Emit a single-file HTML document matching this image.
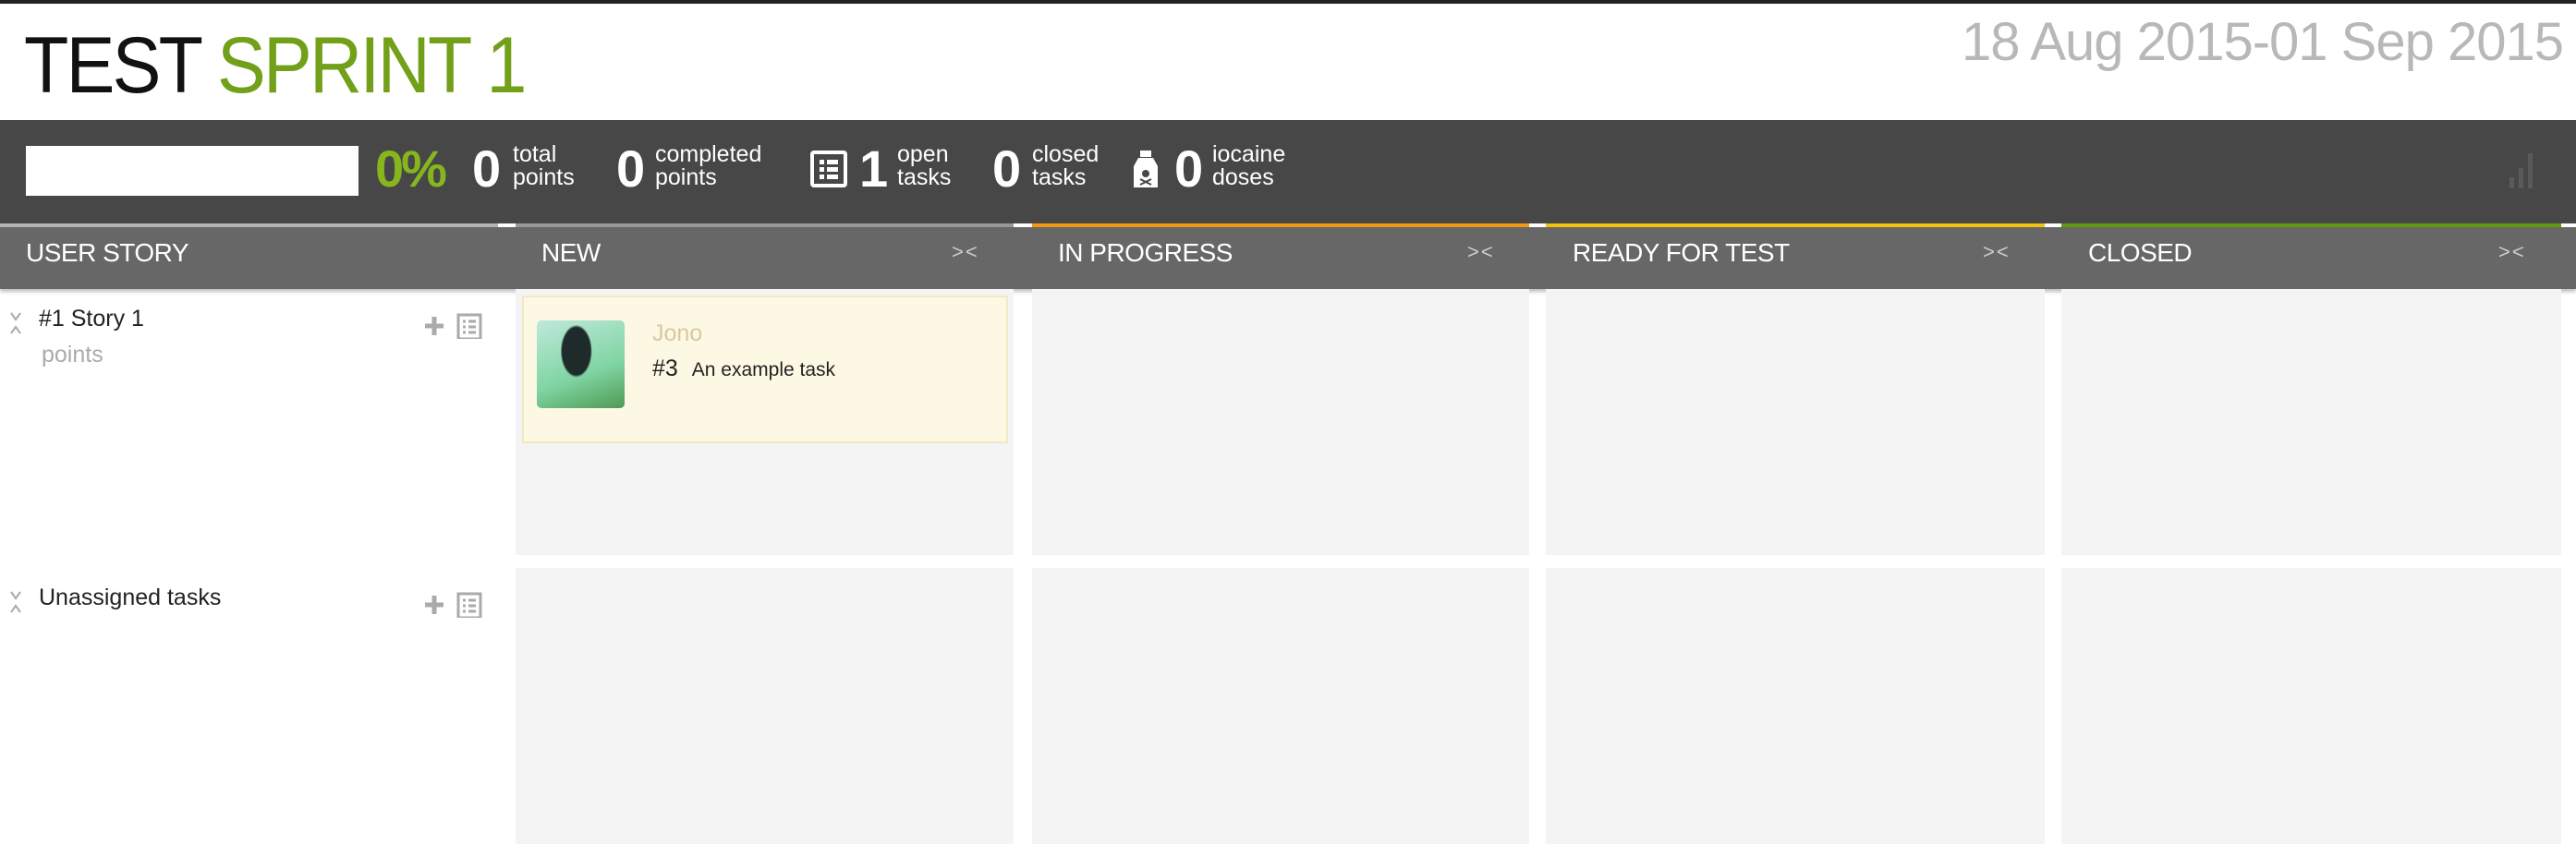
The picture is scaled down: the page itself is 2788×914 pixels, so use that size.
<!DOCTYPE html>
<html><head><meta charset="utf-8"><style>
*{margin:0;padding:0;box-sizing:border-box}
body{width:2788px;height:914px;background:#fff;font-family:"Liberation Sans",sans-serif;position:relative;overflow:hidden}
.a{position:absolute;white-space:nowrap}
.top{left:0;top:0;width:2788px;height:4px;background:#222}
.title{left:26px;top:22px;font-size:86px;letter-spacing:-3px;color:#111;transform:scaleX(0.92);transform-origin:left top}
.title span{color:#72a019}
.date{right:14px;top:12px;font-size:58px;color:#b8b8b8;letter-spacing:-1px}
.bar{left:0;top:130px;width:2788px;height:112px;background:#474747}
.prog{left:28px;top:158px;width:360px;height:54px;background:#fff}
.pct{left:406px;top:150px;font-size:56px;font-weight:bold;color:#86b51e;letter-spacing:-3px}
.n{top:150px;font-size:56px;font-weight:bold;color:#fff}
.l{top:155px;font-size:25px;line-height:25px;color:#fff}
.hl{top:242px;height:4px}
.hd{top:246px;height:67px;background:#676767;box-shadow:0 3px 4px rgba(0,0,0,.25)}
.ht{top:258px;font-size:28px;color:#fff;letter-spacing:-.5px}
.col{font-size:22px;color:#ccc;top:260px;letter-spacing:2px}
.cell{background:#f4f4f4}
.card{left:565px;top:320px;width:526px;height:160px;background:#fdf8e3;border:2px solid #f2e8c4}
.av{left:581px;top:347px;width:95px;height:95px;border-radius:5px;background:radial-gradient(ellipse 18% 30% at 45% 35%,#1f2a2a 0 90%,transparent 100%),linear-gradient(160deg,#bfe9dc,#7fd4a2 60%,#4f9a55);}
</style></head><body>
<div class="a top"></div>
<div class="a title">TEST <span>SPRINT 1</span></div>
<div class="a date">18 Aug 2015-01 Sep 2015</div>
<div class="a bar"></div>
<div class="a prog"></div>
<div class="a pct">0%</div>
<div class="a n" style="left:511px">0</div><div class="a l" style="left:555px">total<br>points</div>
<div class="a n" style="left:667px">0</div><div class="a l" style="left:709px">completed<br>points</div>
<svg class="a" style="left:877px;top:163px" width="40" height="40" viewBox="0 0 40 40"><rect x="2" y="2" width="36" height="36" fill="none" stroke="#fff" stroke-width="4" rx="2"/><rect x="10" y="10" width="5" height="5" fill="#fff"/><rect x="18" y="10" width="12" height="5" fill="#fff"/><rect x="10" y="18" width="5" height="5" fill="#fff"/><rect x="18" y="18" width="12" height="5" fill="#fff"/><rect x="10" y="26" width="5" height="5" fill="#fff"/><rect x="18" y="26" width="12" height="5" fill="#fff"/></svg>
<div class="a n" style="left:930px">1</div><div class="a l" style="left:971px">open<br>tasks</div>
<div class="a n" style="left:1074px">0</div><div class="a l" style="left:1117px">closed<br>tasks</div>
<svg class="a" style="left:1226px;top:163px" width="28" height="42" viewBox="0 0 28 42"><rect x="8" y="0" width="12" height="7" fill="#fff"/><path d="M6 8h16l5 9v23H1V17z" fill="#fff"/><circle cx="14" cy="25" r="4" fill="#474747"/><path d="M8 31l12 6M20 31L8 37" stroke="#474747" stroke-width="2"/></svg>
<div class="a n" style="left:1271px">0</div><div class="a l" style="left:1312px">iocaine<br>doses</div>
<svg class="a" style="left:2714px;top:166px" width="30" height="38"><rect x="2" y="26" width="5" height="12" fill="#5a5a5a"/><rect x="12" y="16" width="5" height="22" fill="#5a5a5a"/><rect x="22" y="0" width="5" height="38" fill="#5a5a5a"/></svg>

<div class="a hl" style="left:0;width:539px;background:#b4b4b4"></div>
<div class="a hl" style="left:558px;width:539px;background:#999"></div>
<div class="a hl" style="left:1117px;width:538px;background:#f39a11"></div>
<div class="a hl" style="left:1673px;width:540px;background:#f3c20e"></div>
<div class="a hl" style="left:2231px;width:541px;background:#5e9a12"></div>
<div class="a hd" style="left:0;width:2788px"></div>
<div class="a ht" style="left:28px">USER STORY</div>
<div class="a ht" style="left:586px">NEW</div>
<div class="a ht" style="left:1145px">IN PROGRESS</div>
<div class="a ht" style="left:1702px">READY FOR TEST</div>
<div class="a ht" style="left:2260px">CLOSED</div>
<div class="a col" style="left:1030px">&gt;&lt;</div>
<div class="a col" style="left:1588px">&gt;&lt;</div>
<div class="a col" style="left:2146px">&gt;&lt;</div>
<div class="a col" style="left:2704px">&gt;&lt;</div>

<div class="a cell" style="left:558px;top:313px;width:539px;height:288px"></div>
<div class="a cell" style="left:1117px;top:313px;width:538px;height:288px"></div>
<div class="a cell" style="left:1673px;top:313px;width:540px;height:288px"></div>
<div class="a cell" style="left:2231px;top:313px;width:541px;height:288px"></div>
<div class="a cell" style="left:558px;top:615px;width:539px;height:299px"></div>
<div class="a cell" style="left:1117px;top:615px;width:538px;height:299px"></div>
<div class="a cell" style="left:1673px;top:615px;width:540px;height:299px"></div>
<div class="a cell" style="left:2231px;top:615px;width:541px;height:299px"></div>

<div class="a card"></div>
<div class="a av"></div>
<div class="a" style="left:706px;top:347px;font-size:25px;color:#d6c9a0">Jono</div>
<div class="a" style="left:706px;top:385px;font-size:25px;color:#222">#3 <span style="font-size:21px;margin-left:8px">An example task</span></div>

<svg class="a" style="left:10px;top:337px" width="14" height="26"><path d="M2 2l5 7 5-7M2 24l5-7 5 7" fill="none" stroke="#aaa" stroke-width="2"/></svg>
<div class="a" style="left:42px;top:331px;font-size:25px;color:#222">#1 Story 1</div>
<div class="a" style="left:45px;top:370px;font-size:25px;color:#aaa">points</div>
<svg class="a" style="left:10px;top:639px" width="14" height="26"><path d="M2 2l5 7 5-7M2 24l5-7 5 7" fill="none" stroke="#aaa" stroke-width="2"/></svg>
<div class="a" style="left:42px;top:633px;font-size:25px;color:#222">Unassigned tasks</div>
<svg class="a" style="left:456px;top:339px" width="70" height="28"><path d="M4 14h20M14 4v20" stroke="#aaa" stroke-width="5"/><rect x="40" y="2" width="24" height="26" fill="none" stroke="#aaa" stroke-width="3"/><path d="M45 9h3M51 9h8M45 15h3M51 15h8M45 21h3M51 21h8" stroke="#aaa" stroke-width="3"/></svg>
<svg class="a" style="left:456px;top:641px" width="70" height="28"><path d="M4 14h20M14 4v20" stroke="#aaa" stroke-width="5"/><rect x="40" y="2" width="24" height="26" fill="none" stroke="#aaa" stroke-width="3"/><path d="M45 9h3M51 9h8M45 15h3M51 15h8M45 21h3M51 21h8" stroke="#aaa" stroke-width="3"/></svg>
</body></html>
